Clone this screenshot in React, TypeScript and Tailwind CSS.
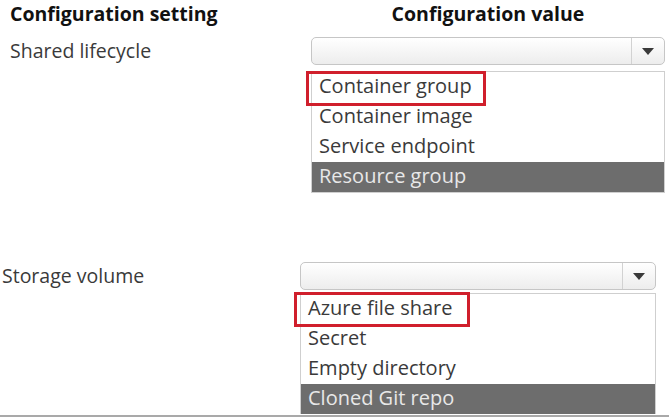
import React from 'react';

type Option = { text: string; boxed?: boolean; selected?: boolean };

const Arrow = () => (
  <svg width="12" height="7" viewBox="0 0 12 7">
    <polygon points="0,0 12,0 6,7" fill="#3a3a3a" />
  </svg>
);

const Select: React.FC = () => (
  <div className="flex h-[28px] rounded-[5px] border border-[#c6c6c6] bg-gradient-to-b from-white to-[#ededed]">
    <div className="flex-1" />
    <div className="flex w-[33px] items-center justify-center border-l border-[#d2d2d2]">
      <Arrow />
    </div>
  </div>
);

const Setting: React.FC<{
  label: string;
  options: Option[];
  labelWidth: string;
  colWidth: string;
  boxClass: string;
  listClass: string;
}> = ({ label, options, labelWidth, colWidth, boxClass, listClass }) => (
  <div className="flex">
    <div className={`${labelWidth} h-[28px] leading-[28px] text-[19.5px] text-[#3a3a3a]`}>{label}</div>
    <div className={colWidth}>
      <Select />
      <div className={listClass}>
        {options.map((o) => (
          <div
            key={o.text}
            className={`relative h-[30px] pl-[7px] leading-[28px] text-[20px] ${
              o.selected ? 'bg-[#6d6d6d] text-[#e8e8e8]' : 'text-[#3a3a3a]'
            }`}
          >
            {o.text}
            {o.boxed && <div className={boxClass} />}
          </div>
        ))}
      </div>
    </div>
  </div>
);

export default function App() {
  return (
    <div className="w-[669px] h-[417px] overflow-hidden bg-white font-['Open_Sans',sans-serif]">
      <div className="flex h-[27px] items-center text-[19.5px] leading-[27px] font-bold text-[#111]">
        <div className="w-[311px] pl-[10px]">Configuration setting</div>
        <div className="w-[354px] text-center">Configuration value</div>
      </div>

      <div className="mt-[10px] pl-[10px]">
        <Setting
          label="Shared lifecycle"
          labelWidth="w-[301px]"
          colWidth="w-[354px]"
          listClass="mt-[6px] border border-[#cfcfcf]"
          boxClass="absolute -left-[6px] -top-[1px] h-[35px] w-[180px] border-[3px] border-[#d01f2c]"
          options={[
            { text: 'Container group', boxed: true },
            { text: 'Container image' },
            { text: 'Service endpoint' },
            { text: 'Resource group', selected: true },
          ]}
        />
      </div>

      <div className="mt-[69px] pl-[2px]">
        <Setting
          label="Storage volume"
          labelWidth="w-[298px]"
          colWidth="w-[356px]"
          listClass="mt-[3px] border-x border-t border-[#cfcfcf]"
          boxClass="absolute -left-[7px] -top-[2px] h-[35px] w-[176px] border-[3px] border-[#d01f2c]"
          options={[
            { text: 'Azure file share', boxed: true },
            { text: 'Secret' },
            { text: 'Empty directory' },
            { text: 'Cloned Git repo', selected: true },
          ]}
        />
      </div>
      <div className="mt-[1px] h-[2px] bg-[#a9a9a9]" />
    </div>
  );
}
